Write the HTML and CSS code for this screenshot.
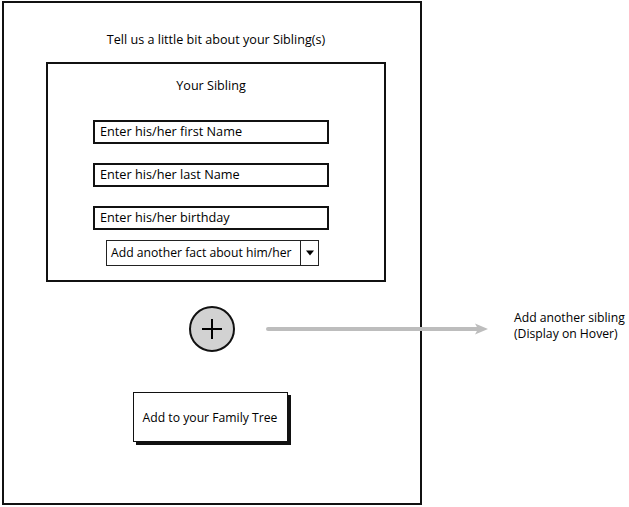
FILE: index.html
```html
<!DOCTYPE html>
<html lang="en">
<head>
    <meta charset="UTF-8">
    <title>Sibling Form</title>
    <link rel="stylesheet" href="styles.css">
</head>
<body>
    <div class="page">
        <div class="frame">
            <p class="frame_title">Tell us a little bit about your Sibling(s)</p>

            <div class="sibling_box">
                <p class="box_title">Your Sibling</p>
                <div class="text_input">Enter his/her first Name</div>
                <div class="text_input">Enter his/her last Name</div>
                <div class="text_input">Enter his/her birthday</div>
                <div class="fact_select">
                    <span class="fact_text">Add another fact about him/her</span>
                    <span class="fact_arrow">
                        <svg width="10" height="6" viewBox="0 0 10 6"><path d="M1 0.5 L9 0.5 L5 5.5 Z" fill="#000"/></svg>
                    </span>
                </div>
            </div>

            <div class="add_circle">
                <svg width="24" height="24" viewBox="0 0 24 24">
                    <path d="M12 2 V22 M2 12 H22" stroke="#000" stroke-width="2" fill="none"/>
                </svg>
            </div>

            <div class="family_button">Add to your Family Tree</div>
        </div>

        <div class="note">
            <p>Add another sibling</p>
            <p>(Display on Hover)</p>
        </div>

        <svg class="hover_arrow" width="224" height="12" viewBox="0 0 224 12">
            <path d="M2 6 H212" stroke="#bdbdbd" stroke-width="4" stroke-linecap="round"/>
            <path d="M209 0.5 L222 6 L209 11.5 L212 6 Z" fill="#bdbdbd"/>
        </svg>
    </div>
</body>
</html>
```

FILE: styles.css
```css
/* General */
*{
    font-family: 'Open Sans', sans-serif;
    box-sizing: border-box;
}
body{
    margin: 0px;
    padding: 0px;
    background-color: white;
    color: #000;
}
p{
    margin: 0px;
}
.page{
    position: relative;
    display: flex;
    padding-top: 1px;
    padding-left: 2px;
}

/* Frame */
.frame{
    width: 420px;
    height: 504px;
    border: 2px solid #111;
    display: flex;
    flex-direction: column;
    align-items: center;
}
.frame_title{
    margin-top: 29px;
    margin-left: 8px;
    font-size: 12.6px;
    line-height: 16px;
}
.sibling_box{
    margin-top: 14px;
    margin-left: 8px;
    width: 340px;
    height: 220px;
    border: 2px solid #111;
    display: flex;
    flex-direction: column;
    align-items: center;
    padding-top: 14px;
    padding-right: 10px;
}
.box_title{
    font-size: 12.6px;
    line-height: 16px;
    margin-bottom: 26px;
}
.text_input{
    width: 236px;
    height: 24px;
    border: 2px solid #111;
    font-size: 12.7px;
    line-height: 19px;
    padding-left: 5px;
    margin-bottom: 19px;
}
.text_input:nth-of-type(3){
    margin-bottom: 10px;
}
.fact_select{
    display: flex;
    width: 213px;
    height: 26px;
    border: 1.5px solid #222;
    margin-left: 3px;
}
.fact_text{
    flex: 1;
    font-size: 12.2px;
    line-height: 23px;
    padding-left: 4px;
    border-right: 1.5px solid #222;
    white-space: nowrap;
}
.fact_arrow{
    width: 17px;
    display: flex;
    justify-content: center;
    align-items: center;
}

.add_circle{
    margin-top: 24px;
    width: 46px;
    height: 46px;
    border-radius: 50%;
    border: 2px solid #111;
    background-color: #d2d2d2;
    display: flex;
    justify-content: center;
    align-items: center;
}
.family_button{
    margin-top: 40px;
    margin-right: 4px;
    width: 155px;
    height: 50px;
    border: 1.5px solid #111;
    box-shadow: 3px 3px 0px #111;
    display: flex;
    justify-content: center;
    align-items: center;
    font-size: 12.2px;
}

/* Annotation */
.note{
    margin-left: 92px;
    margin-top: 309px;
    font-size: 12.2px;
    line-height: 16px;
}
.hover_arrow{
    position: absolute;
    left: 266px;
    top: 323px;
}
```
